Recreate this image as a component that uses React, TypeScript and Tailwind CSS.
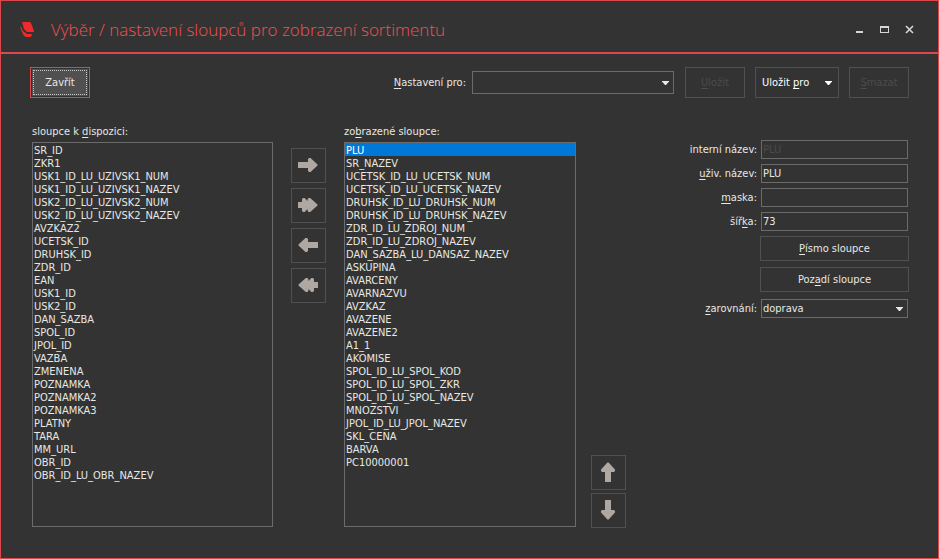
import { useState } from 'react'
import type { ReactNode } from 'react'

const AVAILABLE = [
  'SR_ID',
  'ZKR1',
  'USK1_ID_LU_UZIVSK1_NUM',
  'USK1_ID_LU_UZIVSK1_NAZEV',
  'USK2_ID_LU_UZIVSK2_NUM',
  'USK2_ID_LU_UZIVSK2_NAZEV',
  'AVZKAZ2',
  'UCETSK_ID',
  'DRUHSK_ID',
  'ZDR_ID',
  'EAN',
  'USK1_ID',
  'USK2_ID',
  'DAN_SAZBA',
  'SPOL_ID',
  'JPOL_ID',
  'VAZBA',
  'ZMENENA',
  'POZNAMKA',
  'POZNAMKA2',
  'POZNAMKA3',
  'PLATNY',
  'TARA',
  'MM_URL',
  'OBR_ID',
  'OBR_ID_LU_OBR_NAZEV',
]

const DISPLAYED = [
  'PLU',
  'SR_NAZEV',
  'UCETSK_ID_LU_UCETSK_NUM',
  'UCETSK_ID_LU_UCETSK_NAZEV',
  'DRUHSK_ID_LU_DRUHSK_NUM',
  'DRUHSK_ID_LU_DRUHSK_NAZEV',
  'ZDR_ID_LU_ZDROJ_NUM',
  'ZDR_ID_LU_ZDROJ_NAZEV',
  'DAN_SAZBA_LU_DANSAZ_NAZEV',
  'ASKUPINA',
  'AVARCENY',
  'AVARNAZVU',
  'AVZKAZ',
  'AVAZENE',
  'AVAZENE2',
  'A1_1',
  'AKOMISE',
  'SPOL_ID_LU_SPOL_KOD',
  'SPOL_ID_LU_SPOL_ZKR',
  'SPOL_ID_LU_SPOL_NAZEV',
  'MNOZSTVI',
  'JPOL_ID_LU_JPOL_NAZEV',
  'SKL_CENA',
  'BARVA',
  'PC10000001',
]

function Key({ children }: { children: ReactNode }) {
  return <span className="underline underline-offset-2">{children}</span>
}

function Caret({ className }: { className?: string }) {
  return (
    <svg viewBox="0 0 7 4" className={`h-1 w-[7px] fill-current ${className ?? ''}`} aria-hidden="true">
      <path d="M0 0h7v.6L4 4H3L0 .6z" />
    </svg>
  )
}

interface ListProps {
  id: string
  label: ReactNode
  items: string[]
  value: string[]
  onChange: (value: string[]) => void
}

function ColumnList({ id, label, items, value, onChange }: ListProps) {
  return (
    <div className="flex min-w-0 flex-col gap-1 pb-px">
      <label htmlFor={id} className="whitespace-nowrap">
        {label}
      </label>
      <select
        id={id}
        multiple
        value={value}
        onChange={(e) => onChange(Array.from(e.target.selectedOptions, (o) => o.value))}
        className="min-h-[385px] w-full flex-1 overflow-y-auto border border-[#6b6b6b] bg-transparent p-0 outline-none"
      >
        {items.map((name) => (
          <option
            key={name}
            value={name}
            className="h-[13px] min-h-0 px-px pt-px pb-0 leading-[13px] text-[#e8e8e4] checked:bg-[#0078d7] checked:bg-linear-to-r checked:from-[#0078d7] checked:to-[#0078d7] checked:text-white"
          >
            {name}
          </option>
        ))}
      </select>
    </div>
  )
}

interface ArrowButtonProps {
  title: string
  turn?: number
  double?: boolean
  onClick?: () => void
}

function ArrowButton({ title, turn = 0, double, onClick }: ArrowButtonProps) {
  return (
    <button
      type="button"
      aria-label={title}
      onClick={onClick}
      className="flex size-[35px] items-center justify-center border border-[#505050] text-[#aea7a2]"
    >
      <svg viewBox="0 0 21 21" className="size-[21px] fill-current" aria-hidden="true">
        <g transform={`rotate(${turn} 10 10)`}>
          {double ? (
            <path d="M0 7h4V4l1-1h1.6L9.6 6V4l1-1h1.6L19.5 9.4v1.2L12.2 17h-1.6l-1-1v-2L6.6 17H5l-1-1v-3H0z" />
          ) : (
            <path d="M0 7h10V4l1-1h1.6l6.9 6.4v1.2L12.6 17H11l-1-1v-3H0z" />
          )}
        </g>
      </svg>
    </button>
  )
}

function Field({ id, label, children }: { id: string; label: ReactNode; children: ReactNode }) {
  return (
    <div className="flex items-center justify-end gap-1">
      <label htmlFor={id}>{label}</label>
      <div className="relative mr-px w-[147px]">{children}</div>
    </div>
  )
}

const fieldClass =
  'block h-[19px] w-full appearance-none border border-[#6b6b6b] bg-transparent px-px outline-none disabled:text-[#4c4c4c]'
const buttonClass = 'border border-[#505050] disabled:text-[#4c4c4c]'

export default function App() {
  const [available, setAvailable] = useState(AVAILABLE)
  const [displayed, setDisplayed] = useState(DISPLAYED)
  const [left, setLeft] = useState<string[]>([])
  const [right, setRight] = useState<string[]>(['PLU'])

  const show = (names: string[]) => {
    setAvailable(available.filter((n) => !names.includes(n)))
    setDisplayed([...displayed, ...names])
    setLeft([])
  }

  const hide = (names: string[]) => {
    setDisplayed(displayed.filter((n) => !names.includes(n)))
    setAvailable([...available, ...names])
    setRight([])
  }

  const shift = (step: number) => {
    const from = displayed.indexOf(right[0])
    const to = from + step
    if (from < 0 || to < 0 || to >= displayed.length) return
    const next = [...displayed]
    next.splice(from, 1)
    next.splice(to, 0, right[0])
    setDisplayed(next)
  }

  return (
    <div className="flex min-h-screen flex-col border border-[#dc474a] bg-[#333333] font-['DejaVu_Sans_Condensed','DejaVu_Sans',sans-serif] text-[11px] leading-[13px] text-[#e8e8e4]">
      <header className="flex h-[53px] items-center border-b-2 border-[#dc474a] pt-[6px] pr-[23px] pl-[19px]">
        <svg viewBox="0 0 15 16" className="h-4 w-[15px]" fill="#ee2a2c" aria-hidden="true">
          <path d="M2 0h8l1 1 3 8v1H7L4 7z" />
          <path d="M0 5h1l2 4 4 3h5l-1 3H6l-2-1-2-4z" />
        </svg>
        <h1 className="ml-4 flex-1 truncate font-['Open_Sans',sans-serif] text-[17px] leading-6 font-light text-[#f25154]">
          Výběr / nastavení sloupců pro zobrazení sortimentu
        </h1>
        <div className="flex gap-[15px] text-[#d6d6d6]">
          <button type="button" aria-label="Minimalizovat">
            <svg viewBox="0 0 10 10" className="size-[10px] fill-current">
              <path d="M1 6h7v2H1z" />
            </svg>
          </button>
          <button type="button" aria-label="Maximalizovat">
            <svg viewBox="0 0 10 10" className="size-[10px] fill-current">
              <path fillRule="evenodd" d="M0 1h9v7H0zM1 3v4h7V3z" />
            </svg>
          </button>
          <button type="button" aria-label="Zavřít okno">
            <svg viewBox="0 0 10 10" className="size-[10px] stroke-current" fill="none" strokeWidth="1.6">
              <path d="M1 1l7 7M8 1l-7 7" />
            </svg>
          </button>
        </div>
      </header>

      <div className="flex items-center gap-[10px] px-[29px] pt-[13px]">
        <button type="button" className="h-[31px] w-[60px] border border-[#dc474a] p-px">
          <span className="flex h-full items-center justify-center bg-[#505050] outline outline-dotted -outline-offset-2 outline-[#c8c8c8]">
            Zavřít
          </span>
        </button>
        <label htmlFor="preset" className="ml-auto">
          <Key>N</Key>astavení pro:
        </label>
        <div className="relative mr-px -ml-1 w-[202px]">
          <select id="preset" className="block h-[23px] w-full appearance-none border border-[#6b6b6b] px-1 outline-none" />
          <Caret className="pointer-events-none absolute top-[10px] right-[5px]" />
        </div>
        <button type="button" disabled className={`${buttonClass} h-[31px] w-[60px]`}>
          <Key>U</Key>ložit
        </button>
        <button
          type="button"
          className={`${buttonClass} flex h-[31px] w-[84px] items-center justify-between px-[6px] text-white`}
        >
          <span>
            Uložit <Key>p</Key>ro
          </span>
          <Caret />
        </button>
        <button type="button" disabled className={`${buttonClass} h-[31px] w-[60px]`}>
          <Key>S</Key>mazat
        </button>
      </div>

      <main className="grid flex-1 grid-cols-[minmax(0,241fr)_71px_minmax(0,232fr)_50px_283px] pt-[27px] pr-[29px] pb-[30px] pl-[31px]">
        <ColumnList
          id="available"
          label={
            <>
              sloupce k <Key>d</Key>ispozici:
            </>
          }
          items={available}
          value={left}
          onChange={setLeft}
        />
        <div className="flex flex-col items-center gap-[5px] pt-[23px]">
          <ArrowButton title="Přidat" onClick={() => show(left)} />
          <ArrowButton title="Přidat vše" double onClick={() => show(available)} />
          <ArrowButton title="Odebrat" turn={180} onClick={() => hide(right)} />
          <ArrowButton title="Odebrat vše" turn={180} double onClick={() => hide(displayed)} />
        </div>
        <ColumnList
          id="displayed"
          label={
            <>
              zo<Key>b</Key>razené sloupce:
            </>
          }
          items={displayed}
          value={right}
          onChange={setRight}
        />
        <div className="flex flex-col items-end justify-end gap-[3px]">
          <ArrowButton title="Nahoru" turn={-90} onClick={() => shift(-1)} />
          <ArrowButton title="Dolů" turn={90} onClick={() => shift(1)} />
        </div>
        <form className="flex flex-col gap-[5px] pt-[15px]">
          <Field id="internal" label="interní název:">
            <input id="internal" disabled defaultValue="PLU" className={fieldClass} />
          </Field>
          <Field
            id="custom"
            label={
              <>
                <Key>u</Key>živ. název:
              </>
            }
          >
            <input id="custom" defaultValue="PLU" className={fieldClass} />
          </Field>
          <Field
            id="mask"
            label={
              <>
                <Key>m</Key>aska:
              </>
            }
          >
            <input id="mask" className={fieldClass} />
          </Field>
          <Field
            id="width"
            label={
              <>
                šíř<Key>k</Key>a:
              </>
            }
          >
            <input id="width" defaultValue="73" className={fieldClass} />
          </Field>
          <div className="mb-[2px] flex flex-col items-end gap-[6px]">
            <button type="button" className={`${buttonClass} h-[25px] w-[149px]`}>
              <Key>P</Key>ísmo sloupce
            </button>
            <button type="button" className={`${buttonClass} h-[25px] w-[149px]`}>
              Poz<Key>a</Key>dí sloupce
            </button>
          </div>
          <Field
            id="align"
            label={
              <>
                <Key>z</Key>arovnání:
              </>
            }
          >
            <select id="align" defaultValue="doprava" className={fieldClass}>
              <option className="bg-[#333333]">doleva</option>
              <option className="bg-[#333333]">doprava</option>
              <option className="bg-[#333333]">na střed</option>
            </select>
            <Caret className="pointer-events-none absolute top-2 right-[5px]" />
          </Field>
        </form>
      </main>
    </div>
  )
}
